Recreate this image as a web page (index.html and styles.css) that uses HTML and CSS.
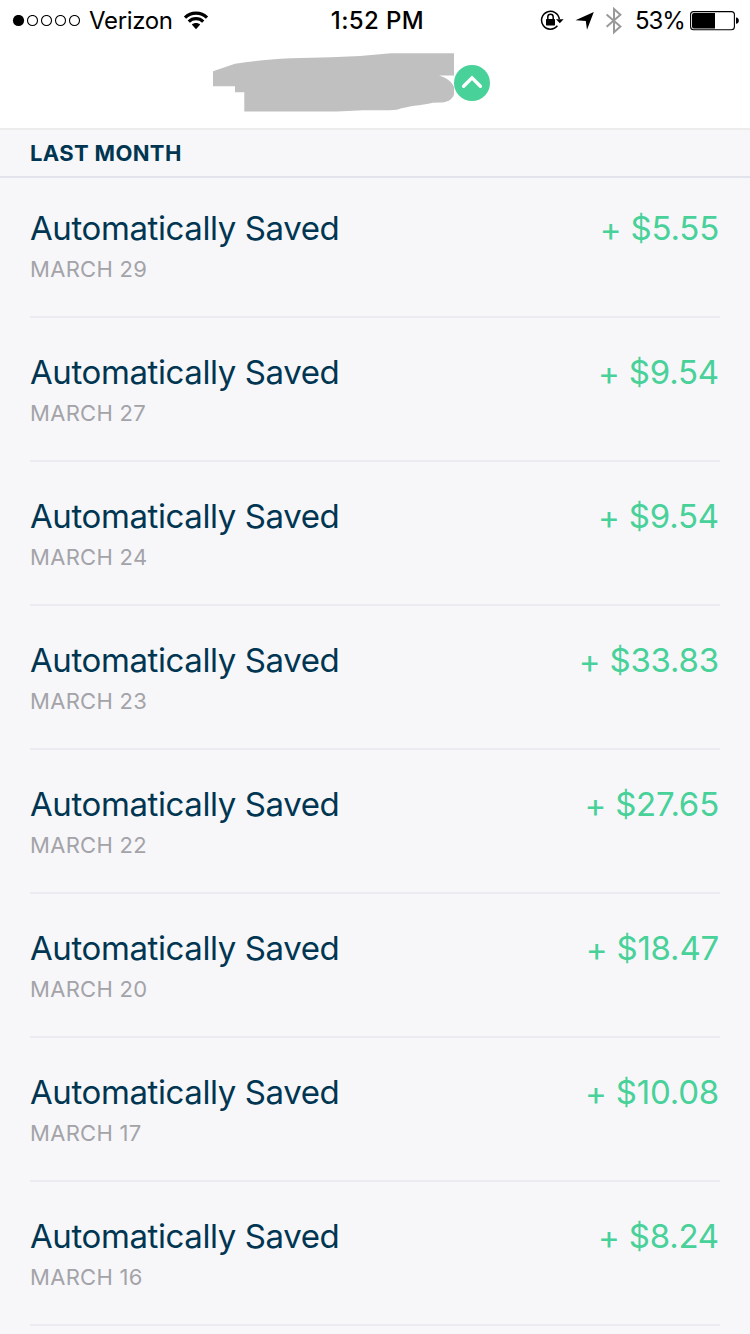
FILE: index.html
```html
<!DOCTYPE html>
<html lang="en">
<head>
    <meta charset="UTF-8">
    <meta name="viewport" content="width=device-width, initial-scale=1.0">
    <title>Savings History</title>
    <link rel="stylesheet" href="styles.css">
</head>
<body>

    <!-- Status bar -->
    <div class="status-bar">
        <div class="status-left">
            <svg class="signal" width="70" height="12" viewBox="0 0 70 12">
                <circle cx="6.5" cy="5.5" r="5.6"/>
                <g fill="none" stroke="#000" stroke-width="1.1">
                    <circle cx="20.5" cy="5.5" r="5"/>
                    <circle cx="34.5" cy="5.5" r="5"/>
                    <circle cx="48.5" cy="5.5" r="5"/>
                    <circle cx="62.5" cy="5.5" r="5"/>
                </g>
            </svg>
            <span class="carrier">Verizon</span>
            <svg class="wifi" width="26" height="20" viewBox="0 0 26 20">
                <g fill="none" stroke="#000" stroke-width="3.2">
                    <path d="M2 6.6 C8 .6 18 .6 24 6.6"/>
                    <path d="M5.8 10.6 C9.8 6.7 16.2 6.7 20.2 10.6"/>
                </g>
                <path d="M8.8 13.6 C11.2 11.6 14.8 11.6 17.2 13.6 L13 18.2 Z"/>
            </svg>
        </div>
        <span class="time">1:52 PM</span>
        <div class="status-right">
            <svg class="lock" width="24" height="22" viewBox="0 0 24 22">
                <path d="M17.4 15.8 A8.9 8.9 0 1 1 19.3 9.2" fill="none" stroke="#000" stroke-width="1.5"/>
                <path d="M16 9.2 H23.6 L19.8 13.2 Z"/>
                <rect x="6" y="9" width="9" height="6.4" rx=".6"/>
                <path d="M7.8 9.4 V6.9 A2.7 2.7 0 0 1 13.2 6.9 V9.4" fill="none" stroke="#000" stroke-width="1.5"/>
            </svg>
            <svg class="location" width="20" height="20" viewBox="0 0 20 20">
                <path d="M18.8 1 L12 18.8 L10.8 10 L.5 9.3 Z"/>
            </svg>
            <svg class="bluetooth" width="18" height="28" viewBox="0 0 18 28">
                <path d="M1.6 7.4 L15.4 19.4 L9 25.2 V2 L15.4 7.8 L1.6 19.8" fill="none" stroke="#999" stroke-width="2"/>
            </svg>
            <span class="percent">53%</span>
            <svg class="battery" width="50" height="20" viewBox="0 0 50 20">
                <rect x=".6" y=".6" width="43.8" height="18.2" rx="3" fill="none" stroke="#000" stroke-width="1.1"/>
                <path d="M4 2 H25 V17.4 H4 A2 2 0 0 1 2 15.4 V4 A2 2 0 0 1 4 2 Z"/>
                <path d="M46 6.6 C49.8 6.8 49.8 12.6 46 12.8 Z"/>
            </svg>
        </div>
    </div>

    <!-- Header with the hidden balance -->
    <header class="header">
        <svg class="redacted" width="241" height="60" viewBox="0 0 241 60">
            <path d="M0 18.2 L22 10.8 C40 8 56 6.4 78 5.3 L118 4.3 L147 2.9 L178 .2 H241 V22.5 H226 C235 25.5 241.5 30 241.5 38 C241.5 45 236 49.5 227 49.6 L220 49.8 C208 52.3 194 53.4 185 56.4 Q180 57.4 174 57.2 L150 57.3 L124 58.6 H31.3 V39.3 H22 V33.2 H0 Z" fill="#c0c0c0"/>
        </svg>
        <button class="collapse" aria-label="Collapse">
            <svg width="36" height="36" viewBox="0 0 36 36">
                <path d="M9.6 21.3 L18 12.9 L26.4 21.3" fill="none" stroke="#fff" stroke-width="3.4" stroke-linecap="round" stroke-linejoin="miter"/>
            </svg>
        </button>
    </header>

    <h2 class="section-title">LAST MONTH</h2>

    <ul class="transactions">
        <li class="transaction">
            <div class="details">
                <span class="name">Automatically Saved</span>
                <span class="date">MARCH 29</span>
            </div>
            <span class="amount"><span class="plus">+</span> $5.55</span>
        </li>
        <li class="transaction">
            <div class="details">
                <span class="name">Automatically Saved</span>
                <span class="date">MARCH 27</span>
            </div>
            <span class="amount"><span class="plus">+</span> $9.54</span>
        </li>
        <li class="transaction">
            <div class="details">
                <span class="name">Automatically Saved</span>
                <span class="date">MARCH 24</span>
            </div>
            <span class="amount"><span class="plus">+</span> $9.54</span>
        </li>
        <li class="transaction">
            <div class="details">
                <span class="name">Automatically Saved</span>
                <span class="date">MARCH 23</span>
            </div>
            <span class="amount"><span class="plus">+</span> $33.83</span>
        </li>
        <li class="transaction">
            <div class="details">
                <span class="name">Automatically Saved</span>
                <span class="date">MARCH 22</span>
            </div>
            <span class="amount"><span class="plus">+</span> $27.65</span>
        </li>
        <li class="transaction">
            <div class="details">
                <span class="name">Automatically Saved</span>
                <span class="date">MARCH 20</span>
            </div>
            <span class="amount"><span class="plus">+</span> $18.47</span>
        </li>
        <li class="transaction">
            <div class="details">
                <span class="name">Automatically Saved</span>
                <span class="date">MARCH 17</span>
            </div>
            <span class="amount"><span class="plus">+</span> $10.08</span>
        </li>
        <li class="transaction">
            <div class="details">
                <span class="name">Automatically Saved</span>
                <span class="date">MARCH 16</span>
            </div>
            <span class="amount"><span class="plus">+</span> $8.24</span>
        </li>
    </ul>

</body>
</html>
```

FILE: styles.css
```css
* {
    box-sizing: border-box;
}

body, html {
    height: 100%;
    margin: 0;
    font-family: Inter, "Liberation Sans", sans-serif;
    background-color: #f7f7fa;
    color: #003651;
    overflow: hidden;
}

svg {
    display: block;
    flex-shrink: 0;
}

/* Status bar */
.status-bar {
    display: grid;
    grid-template-columns: 327px 101px 1fr;
    align-items: center;
    height: 42px;
    background-color: #fff;
    color: #000;
    font-size: 24px;
    line-height: 42px;
    white-space: nowrap;
}

.status-left,
.status-right {
    display: flex;
    align-items: center;
    height: 42px;
}

.status-left {
    padding-left: 12px;
}

.carrier {
    width: 83px;
    margin: 0 11px 0 7px;
    letter-spacing: -0.35px;
}

.time {
    text-align: center;
    font-weight: 500;
    letter-spacing: 0.4px;
}

.status-right {
    justify-content: flex-end;
    padding-right: 10px;
}

.location {
    margin-left: 11px;
}

.bluetooth {
    margin-left: 10px;
}

.percent {
    width: 49px;
    margin: 0 6px 0 12px;
    letter-spacing: -1.1px;
}

/* Header */
.header {
    display: flex;
    justify-content: center;
    height: 88px;
    padding: 11px 47px 0 0;
    background-color: #fff;
    border-bottom: 2px solid #ececec;
}

.collapse {
    width: 36px;
    height: 36px;
    margin-top: 12px;
    padding: 0;
    border: none;
    border-radius: 50%;
    background-color: #48d199;
}

.section-title {
    height: 48px;
    margin: 0;
    padding-left: 30px;
    border-bottom: 2px solid #e3e3eb;
    font-size: 22px;
    font-weight: 650;
    line-height: 46px;
    letter-spacing: 0.35px;
}

/* Transactions */
.transactions {
    margin: -4px 0 0;
    padding: 0 30px;
    list-style: none;
}

.transaction {
    display: flex;
    justify-content: space-between;
    height: 144px;
    padding-top: 34px;
    border-bottom: 2px solid #ebebf1;
}

.details {
    display: flex;
    flex-direction: column;
}

.name,
.amount {
    height: 40px;
    font-size: 33px;
    line-height: 40px;
    white-space: nowrap;
}

.name {
    letter-spacing: -0.4px;
}

.date {
    margin-top: 6px;
    color: #a3a3a8;
    font-size: 22px;
    line-height: 30px;
    letter-spacing: 0.3px;
}

.amount {
    padding-right: 1px;
    color: #48d199;
    letter-spacing: -0.2px;
}

.plus {
    line-height: 1;
    vertical-align: -1px;
}
```
